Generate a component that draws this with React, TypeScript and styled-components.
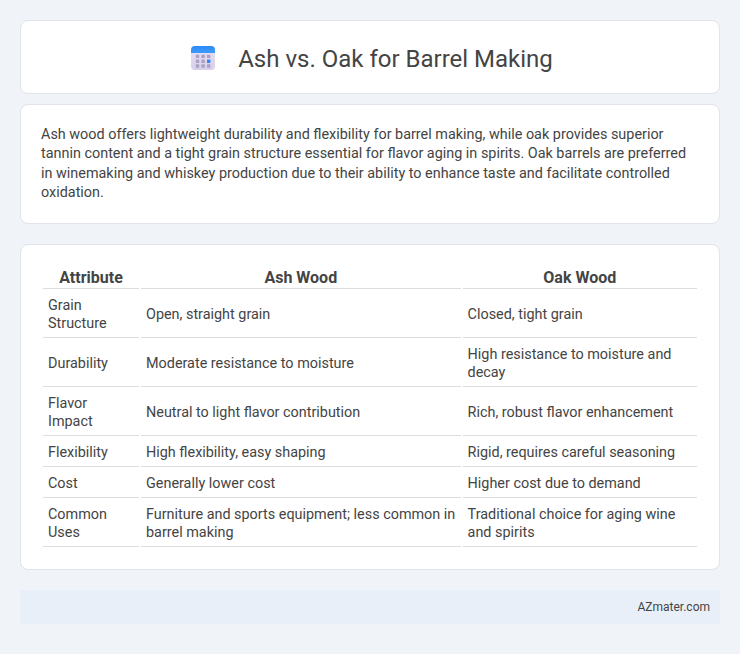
import React from "react";
import styled, { createGlobalStyle } from "styled-components";

const Global = createGlobalStyle`
  html, body { margin: 0; padding: 0; background: #f0f4f8; }
  body { font-family: Roboto, "Liberation Sans", sans-serif; color: #444; }
`;
const Page = styled.div`
  padding: 20px;
  display: flex;
  flex-direction: column;
`;
const Card = styled.div<{ $mb: number }>`
  background: #fff;
  border: 1px solid #e0e4ea;
  border-radius: 8px;
  margin-bottom: ${(p) => p.$mb}px;
`;
const TitleCard = styled(Card)`
  box-sizing: border-box;
  height: 74px;
  padding: 4px 0 0 4px;
  display: flex;
  align-items: center;
  justify-content: center;
  gap: 23px;
`;
const IconSlot = styled.span`
  display: flex;
  margin-top: -2px;
`;
const Title = styled.h1`
  margin: 0;
  font-size: 24px;
  font-weight: 400;
  line-height: 28px;
  color: #444;
`;
const Desc = styled(Card)`
  padding: 20px;
  font-size: 14.4px;
  line-height: 19.44px;
  color: #444;
`;
const Para = styled.p`
  margin: 0;
`;
const TableCard = styled(Card)`
  padding: 20px;
`;
const Table = styled.table`
  width: 100%;
  table-layout: fixed;
  border-collapse: separate;
  border-spacing: 2px;
  font-size: 14.4px;
  line-height: 18px;
`;
const Th = styled.th<{ $w: number }>`
  box-sizing: border-box;
  width: ${(p) => p.$w}px;
  padding: 1px 5px 1px;
  font-size: 16px;
  font-weight: 700;
  line-height: 19px;
  text-align: center;
  border-bottom: 1px solid #ddd;
  color: #444;
`;
const Td = styled.td`
  padding: 6px 5px 4px;
  text-align: left;
  border-bottom: 1px solid #ddd;
  color: #444;
`;
const Footer = styled.div`
  height: 34px;
  padding: 0 10px;
  background: #e8eff8;
  display: flex;
  align-items: center;
  justify-content: flex-end;
  font-size: 12px;
  color: #444;
`;

const CalendarIcon = () => (
  <svg width="24" height="24" viewBox="0 0 24 24" aria-hidden="true">
    <defs>
      <linearGradient id="calBody" x1="0" y1="0" x2="0" y2="1">
        <stop offset="0" stopColor="#e8e2f4" />
        <stop offset="1" stopColor="#d8cfe9" />
      </linearGradient>
      <linearGradient id="calTop" x1="0" y1="0" x2="0" y2="1">
        <stop offset="0" stopColor="#2a8af8" />
        <stop offset="1" stopColor="#3f9bf9" />
      </linearGradient>
    </defs>
    <rect x="0" y="0" width="24" height="24" rx="4" fill="url(#calBody)" />
    <path d="M0 7V4a4 4 0 0 1 4-4h16a4 4 0 0 1 4 4v3z" fill="url(#calTop)" />
    {[0, 1, 2].map((r) =>
      [0, 1, 2].map((c) => (
        <rect
          key={`${r}-${c}`}
          x={4.8 + c * 5.6}
          y={8.7 + r * 4.8}
          width="3.4"
          height="3.4"
          rx="0.4"
          fill={r === 1 && c === 2 ? "#2a8af8" : "#aaa2c2"}
        />
      ))
    )}
  </svg>
);

const rows = [
  ["Grain Structure", "Open, straight grain", "Closed, tight grain"],
  ["Durability", "Moderate resistance to moisture", "High resistance to moisture and decay"],
  ["Flavor Impact", "Neutral to light flavor contribution", "Rich, robust flavor enhancement"],
  ["Flexibility", "High flexibility, easy shaping", "Rigid, requires careful seasoning"],
  ["Cost", "Generally lower cost", "Higher cost due to demand"],
  ["Common Uses", "Furniture and sports equipment; less common in barrel making", "Traditional choice for aging wine and spirits"],
];

export default function App() {
  return (
    <Page>
      <Global />
      <TitleCard $mb={10}>
        <IconSlot>
          <CalendarIcon />
        </IconSlot>
        <Title>Ash vs. Oak for Barrel Making</Title>
      </TitleCard>
      <Desc $mb={20}>
        <Para>
          Ash wood offers lightweight durability and flexibility for barrel making, while oak provides superior tannin content and a tight grain structure essential for flavor aging in spirits. Oak barrels are preferred in winemaking and whiskey production due to their ability to enhance taste and facilitate controlled oxidation.
        </Para>
      </Desc>
      <TableCard $mb={20}>
        <Table>
          <thead>
            <tr>
              <Th $w={96}>Attribute</Th>
              <Th $w={319.6}>Ash Wood</Th>
              <Th $w={234.4}>Oak Wood</Th>
            </tr>
          </thead>
          <tbody>
            {rows.map((r) => (
              <tr key={r[0]}>
                {r.map((c) => (
                  <Td key={c}>{c}</Td>
                ))}
              </tr>
            ))}
          </tbody>
        </Table>
      </TableCard>
      <Footer>AZmater.com</Footer>
    </Page>
  );
}
